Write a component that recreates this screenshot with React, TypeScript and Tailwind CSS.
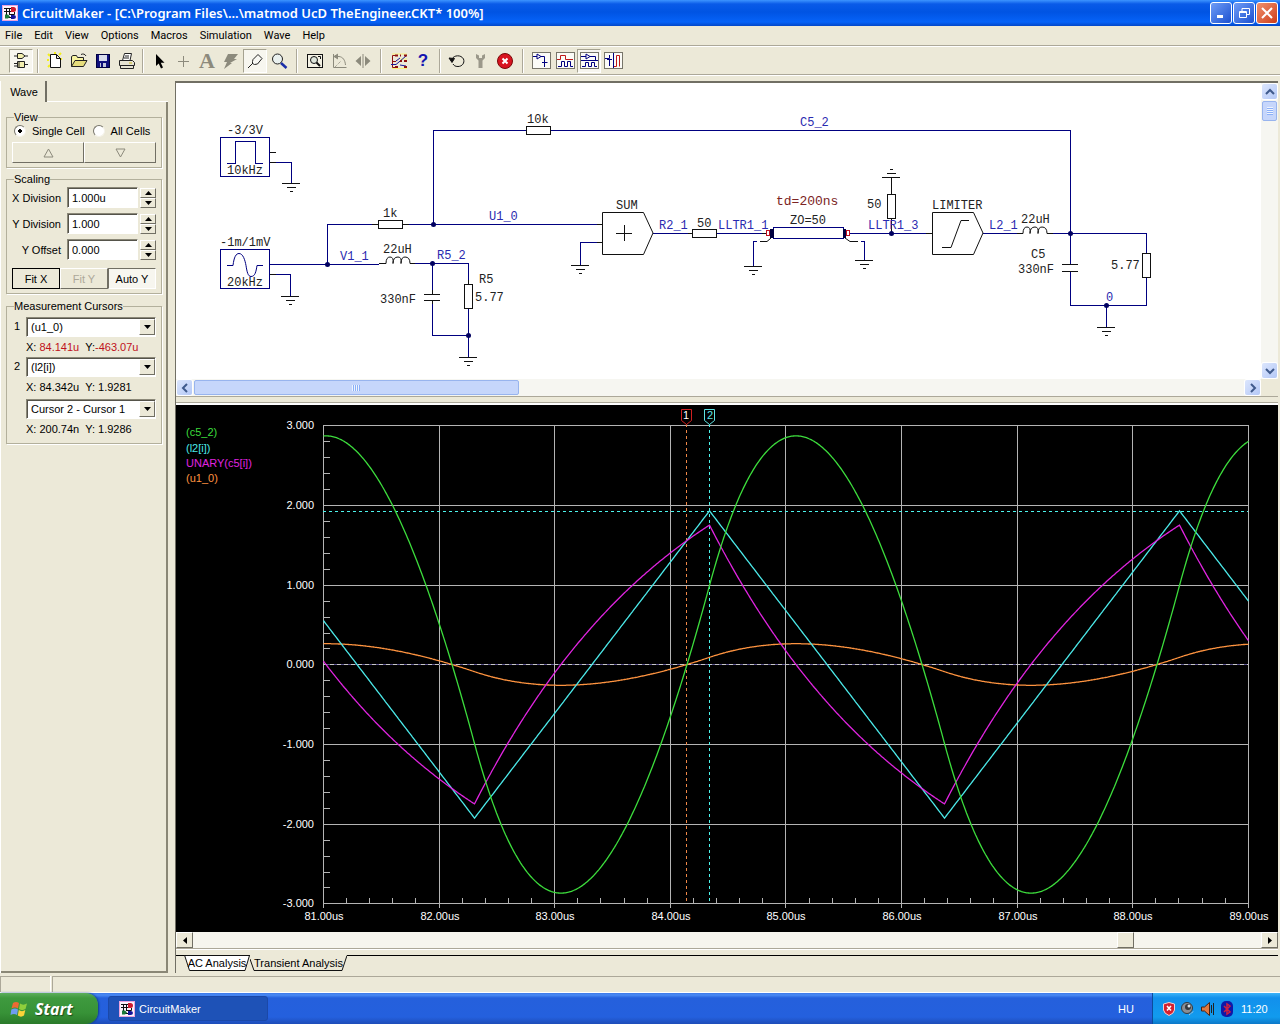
import React from "react";

/* ---------- small drawings ---------- */

function AppLogo() {
  return (
    <svg width="16" height="16" viewBox="0 0 16 16" className="shrink-0" aria-hidden="true">
      <rect width="16" height="16" fill="#fdf3fa" />
      <rect x="0.5" y="0.5" width="15" height="15" fill="none" stroke="#eaa2dc" />
      <path d="M2 3.5H10M2 6.5H9M4.5 3V13M4.5 12.5H9M7.500 3V9M7 9.500H12.500V7" stroke="#111" fill="none" />
      <path d="M9 2H11.500Q14 2 14 4.500Q14 7 11.500 7H9Z" fill="#d01c30" />
      <path d="M9 10H11.500Q14 10 14 12Q14 14 11.500 14H9Z" fill="#14149a" />
      <path d="M3 9.500H6L8 11.500L6 13.500H3Z" fill="#1c7a3a" />
    </svg>
  );
}

function WindowsFlag() {
  return (
    <svg width="19" height="18" viewBox="0 0 19 18" aria-hidden="true">
      <path d="M3 3C5 1.500 7 1.500 9 3L8 8.500C6 7 4 7 1.500 8.500Z" fill="#ee6a34" />
      <path d="M10 3.500C12 5 14.500 5 17 3.500L15.500 9C13 10.500 11 10.500 9 9Z" fill="#8fcf3c" />
      <path d="M1.300 9.500C4 8 6 8 8 9.500L7 15C5 13.500 3 13.500 0.500 15Z" fill="#6f9df0" />
      <path d="M8.800 10C11 11.500 13 11.500 15.300 10L14 15.500C12 17 10 17 7.800 15.500Z" fill="#fbd33a" />
    </svg>
  );
}

const navy = "#000080";

const toolIcons: Record<string, React.ReactNode> = {
  gates: (
    <g fill="#f3efae" stroke="#222">
      <path d="M6.500 2.500H11L14 5L11 7.500H6.500ZM3 5H6M14 5H17" />
      <path d="M6.500 10.500H13.500V16.500H6.500ZM3 12.500H6M3 15H6M14 13.500H17M8 10V17" />
    </g>
  ),
  new: (
    <g>
      <path d="M3 3L5 5M2 9H4M16 2L14 4M10 1V3M17 8H15M3 16L5 14" stroke="#f4ee1c" strokeWidth="2" />
      <path d="M5.500 3.500H11.500L15.500 7.500V16.500H5.500ZM11.500 3.500V7.500H15.500" fill="#fff" stroke="#111" />
    </g>
  ),
  open: (
    <g stroke="#222">
      <path d="M2.500 15.500V5.500L4 4.500H7.500L8.500 6.500H14.500V9" fill="#f7f3a0" />
      <path d="M2.500 15.500L6 9.500H18L14.500 15.500Z" fill="#e6dd7c" />
      <path d="M12 3.500C14 2.500 16 3 17 5" fill="none" />
    </g>
  ),
  save: (
    <g>
      <rect x="3.500" y="3.500" width="13" height="13" fill="#10107c" stroke="#000040" />
      <rect x="6" y="4" width="8" height="6" fill="#d8dcec" />
      <rect x="7" y="12" width="6" height="4" fill="#c4c8dc" />
      <rect x="8" y="12" width="2" height="4" fill="#10107c" />
    </g>
  ),
  print: (
    <g stroke="#222" fill="#fff">
      <path d="M5.500 9.500L7.500 2.500H14.500L13 9.500Z" />
      <path d="M2.500 9.500H15.500L17.500 11.500V14.500H2.500Z" fill="#e6e3d2" />
      <path d="M3.500 14.500H16.500V17.500H3.500ZM8 5H12M7 7H12" fill="#e6e3d2" />
      <path d="M12 12H15" stroke="#c7b61c" />
    </g>
  ),
  pointer: <path d="M7 3V15L9.700 12.500L12 17.500L14 16.500L11.800 11.700H15.500Z" fill="#000" />,
  plus: <path d="M10.500 5V16M5 10.500H16" stroke="#8c8a7c" />,
  flash: <path d="M7 3H17L13 8H16L9 12H11L3 18L6 11H3Z" fill="#8c8a7c" />,
  probe: (
    <g fill="none" stroke="#222">
      <path d="M3 17L8 12M7.500 10.500V12.500L9.500 13.500L12.500 13L17 7.500L13 3.500L8 8.500Z" fill="#f8f8f4" />
    </g>
  ),
  magnify: (
    <g>
      <circle cx="8.500" cy="8" r="5" fill="#e9f0ee" stroke="#222" />
      <path d="M12 12L17.500 17" stroke="#1a2ea8" strokeWidth="2.500" />
    </g>
  ),
  page: (
    <g>
      <rect x="2.500" y="3.500" width="15" height="13" fill="#f4f2e4" stroke="#111" />
      <circle cx="9" cy="9" r="3.500" fill="#dfe6dc" stroke="#111" />
      <path d="M11.500 11.500L15 15" stroke="#111" strokeWidth="2" />
      <path d="M13 5.500H15.500V8" stroke="#111" fill="none" />
    </g>
  ),
  rotate: (
    <g fill="none" stroke="#8c8a7c">
      <path d="M4.500 3V16.500H17.500" />
      <path d="M5 5.500H10C14 6 16 9 16.500 14" />
      <path d="M9 3L5 5.500L9 8" fill="#8c8a7c" />
      <path d="M6 16L12 10" strokeDasharray="1 1" />
    </g>
  ),
  flip: (
    <g fill="#8c8a7c">
      <path d="M8 5V15L2.500 10ZM12 5V15L17.500 10Z" />
      <rect x="9.500" y="3" width="1" height="14" />
    </g>
  ),
  wires: (
    <g fill="none">
      <path d="M3 3H18M3 17.500H18M10 8H18" stroke="#fbf27c" strokeWidth="1" />
      <path d="M7 4.500H3.500V16.500H7M3.500 10.500H7" stroke="#8c1010" />
      <path d="M2 13.500H7L17 5M7 10L11 7M11 14L17 15" stroke="#1a1a9c" />
      <path d="M6 4.500H9M11 4.500H12M15 4.500H18M11 10H13M15 10H18M6 16H9M15 16H18" stroke="#8c1010" strokeWidth="2" />
    </g>
  ),
  undo: (
    <g fill="none" stroke="#111">
      <path d="M5 8C7 4 14 3.500 16.500 8C18 12 15 15.500 11 15.500C8 15.500 7 14.500 6 13" />
      <path d="M2 7L7.500 7.500L5 11.500Z" fill="#111" />
    </g>
  ),
  wrench: <path d="M5 3V7L7.500 9.500V17H11.500V9.500L14 7V3L11 4.500V7H8V4.500Z" fill="#9b988a" />,
  stop: (
    <g>
      <circle cx="10" cy="10" r="7.500" fill="#d81420" stroke="#7a0808" />
      <path d="M7.500 7.500L12.500 12.500M12.500 7.500L7.500 12.500" stroke="#fff" strokeWidth="2" />
    </g>
  ),
};

function Panel({ children }: { children: React.ReactNode }) {
  return (
    <g fill="none">
      <rect x="1.500" y="1.500" width="18" height="16" fill="#fbfbf7" stroke="#77756a" />
      {children}
    </g>
  );
}

toolIcons.paneA = (
  <Panel>
    <path d="M2 5.500H6M10 5.500H13.500V11M11 11.500H16.500M13.500 12V16M6 3L10 5.500L6 8Z" stroke={navy} />
  </Panel>
);
toolIcons.paneB = (
  <Panel>
    <path d="M2 8.500H5.500V4.500H10.500V8.500H18" stroke="#c01818" />
    <path d="M3 15.500H6.500V10.500H9.500V15.500H12.500V10.500H15.500V15.500H18" stroke={navy} />
  </Panel>
);
toolIcons.paneC = (
  <Panel>
    <path d="M2 5.500H7M11 5.500H16.500V9M7 3L11 5.500L7 8ZM2 9.500H19" stroke={navy} />
    <path d="M3 15.500H6.500V11.500H9.500V15.500H12.500V11.500H15.500V15.500H18" stroke={navy} />
  </Panel>
);
toolIcons.paneD = (
  <Panel>
    <path d="M2 7.500H6.500V4M4 8.500H9M6.500 9V15M10.500 2V17" stroke={navy} />
    <path d="M11 15.500H13.500V4.500H16.500V15.500" stroke="#c01818" />
  </Panel>
);

function Tool({ icon, label, on }: { icon: string; label: string; on?: boolean }) {
  return (
    <button
      aria-label={label}
      className={
        on
          ? "flex h-6 w-6 items-center justify-center border border-[#a5a290] border-r-white border-b-white bg-[#f7f6ef]"
          : "flex h-6 w-6 items-center justify-center"
      }
    >
      {icon === "letter" ? (
        <span className="font-['Liberation_Serif',serif] text-[22px] leading-5 font-bold text-[#8c8a7c]">A</span>
      ) : icon === "help" ? (
        <span className="font-['Liberation_Sans',sans-serif] text-[17px] leading-5 font-bold text-[#1414b0]">?</span>
      ) : (
        <svg width="20" height="20" viewBox="0 0 20 20" fill="none" className="shrink-0">
          {toolIcons[icon]}
        </svg>
      )}
    </button>
  );
}

function Sep({ size = "mid" }: { size?: "tight" | "mid" | "wide" }) {
  const margin = { tight: "mx-[3px]", mid: "mx-1", wide: "mx-[5px]" }[size];
  return <div className={`${margin} h-6 w-0.5 border-l border-[#aca899] bg-white`} />;
}

/* ---------- sidebar ---------- */

const bevel = "border border-white border-r-[#716f64] border-b-[#716f64] bg-[#ece9d8]";
const sunken = "border border-[#8b8878] border-r-white border-b-white bg-white shadow-[inset_1px_1px_0_#55534a]";

function Group({ title, children }: { title: string; children: React.ReactNode }) {
  return (
    <fieldset className="mr-1 ml-[5px] border border-[#b3b09c] px-[5px] pb-1 shadow-[1px_1px_0_#fff]">
      <legend className="ml-0.5 h-3.5 leading-3.5">{title}</legend>
      {children}
    </fieldset>
  );
}

function SpinRow({ label, value }: { label: string; value: string }) {
  const id = label.replace(" ", "-");
  return (
    <div className="flex items-center justify-end">
      <label htmlFor={id} className="pr-1.5">{label}</label>
      <input id={id} defaultValue={value} className={`h-[21px] w-[71px] px-1 outline-none ${sunken}`} />
      <div className="ml-0.5 flex flex-col">
        <button aria-label={`${label} up`} className={`flex h-2.5 w-4 items-center justify-center ${bevel}`}>
          <svg width="7" height="4" viewBox="0 0 7 4"><path d="M0 4H7L3.500 0Z" /></svg>
        </button>
        <button aria-label={`${label} down`} className={`flex h-2.5 w-4 items-center justify-center ${bevel}`}>
          <svg width="7" height="4" viewBox="0 0 7 4"><path d="M0 0H7L3.500 4Z" /></svg>
        </button>
      </div>
    </div>
  );
}

function Combo({ label, value }: { label: string; value: string }) {
  return (
    <div className="relative min-w-0 flex-1">
      <select aria-label={label} className={`block h-5 w-full appearance-none px-1 outline-none ${sunken}`}>
        <option>{value}</option>
      </select>
      <span className={`pointer-events-none absolute top-0.5 right-px flex h-4 w-4 items-center justify-center ${bevel}`}>
        <svg width="7" height="4" viewBox="0 0 7 4"><path d="M0 0H7L3.500 4Z" /></svg>
      </span>
    </div>
  );
}

function Radio({ label, checked }: { label: string; checked?: boolean }) {
  return (
    <label className="flex items-center gap-1.5">
      <input
        type="radio"
        name="cells"
        defaultChecked={checked}
        className="m-0 h-3 w-3 appearance-none rounded-full border border-[#77756a] border-r-[#f4f2e8] border-b-[#f4f2e8] bg-white checked:bg-[radial-gradient(circle,#000_0_2px,#fff_2px)]"
      />
      {label}
    </label>
  );
}

function Readout({ x, y, red }: { x: string; y: string; red?: boolean }) {
  return (
    <div className="flex h-5 items-center gap-1.5 pl-3.5">
      <span>X: <span className={red ? "text-[#c01020]" : ""}>{x}</span></span>
      <span>{red ? "Y:" : "Y: "}<span className={red ? "text-[#c01020]" : ""}>{y}</span></span>
    </div>
  );
}

function Sidebar() {
  return (
    <aside className="flex w-[168px] shrink-0 flex-col border-l border-white">
      <div className="flex h-[21px]">
        <button className="w-[46px] border-r-2 border-[#716f64] pl-0.5 pt-px">Wave</button>
        <div className="flex-1 border-b border-white" />
      </div>
      <div className="flex flex-1 flex-col border-r-2 border-b-2 border-[#8a8776] pt-2">
        <div className="flex flex-col gap-1">
          <Group title="View">
            <div className="flex h-3.5 items-center gap-2 pl-0.5">
              <Radio label="Single Cell" checked />
              <Radio label="All Cells" />
            </div>
            <div className="mt-1 flex">
              <button aria-label="Previous cell" className={`flex h-[21px] flex-1 items-center justify-center ${bevel}`}>
                <svg width="11" height="10" viewBox="0 0 11 10"><path d="M1 9H10L5.500 1Z" fill="none" stroke="#8c8a7c" /></svg>
              </button>
              <button aria-label="Next cell" className={`flex h-[21px] flex-1 items-center justify-center ${bevel}`}>
                <svg width="11" height="10" viewBox="0 0 11 10"><path d="M1 1H10L5.500 9Z" fill="none" stroke="#8c8a7c" /></svg>
              </button>
            </div>
          </Group>
          <Group title="Scaling">
            <div className="flex flex-col gap-[5px] pt-px">
              <SpinRow label="X Division" value="1.000u" />
              <SpinRow label="Y Division" value="1.000" />
              <SpinRow label="Y Offset" value="0.000" />
            </div>
            <div className="mt-2 flex">
              <button className={`h-[21px] flex-1 outline-1 -outline-offset-1 outline-black ${bevel}`}>Fit X</button>
              <button className={`h-[21px] flex-1 text-[#aca899] ${bevel}`}>Fit Y</button>
              <button className="h-[21px] flex-1 border border-[#716f64] border-r-white border-b-white bg-[#f7f6ef]">Auto Y</button>
            </div>
          </Group>
          <div className="pt-px">
            <Group title="Measurement Cursors">
              <div className="mt-1 flex items-start"><span className="w-3.5 pl-0.5 pt-0.5">1</span><Combo label="Cursor 1" value="(u1_0)" /></div>
              <Readout x="84.141u" y="-463.07u" red />
              <div className="flex items-start"><span className="w-3.5 pl-0.5 pt-0.5">2</span><Combo label="Cursor 2" value="(l2[i])" /></div>
              <Readout x="84.342u" y="1.9281" />
              <div className="mt-0.5 flex"><span className="w-3.5" /><Combo label="Difference" value="Cursor 2 - Cursor 1" /></div>
              <Readout x="200.74n" y="1.9286" />
            </Group>
          </div>
        </div>
      </div>
    </aside>
  );
}

/* ---------- schematic ---------- */

function Ground({ x, y, up }: { x: number; y: number; up?: boolean }) {
  const s = up ? -4 : 4;
  return <path d={`M${x - 9} ${y}.5H${x + 9}M${x - 4} ${y + s}.5H${x + 5}M${x - 1} ${y + 2 * s}.5H${x + 2}`} stroke="#111" />;
}

const nodes: [number, number][] = [
  [433, 224], [327, 264], [432, 263], [468, 335], [891, 233], [1070, 233], [1106, 305],
];

const resistors: [number, number, number, number][] = [
  [526, 126, 24, 8], [378, 220, 24, 8], [692, 229, 24, 8], [464, 284, 8, 24], [887, 194, 8, 24], [1142, 253, 8, 24],
];

const blackLabels: [number, number, string][] = [
  [227, 134, "-3/3V"], [227, 174, "10kHz"], [220, 246, "-1m/1mV"], [227, 286, "20kHz"],
  [383, 217, "1k"], [383, 253, "22uH"], [380, 303, "330nF"], [479, 283, "R5"], [475, 301, "5.77"],
  [527, 123, "10k"], [616, 209, "SUM"], [697, 227, "50"], [790, 224, "ZO=50"], [867, 208, "50"],
  [932, 209, "LIMITER"], [1021, 223, "22uH"], [1031, 258, "C5"], [1018, 273, "330nF"], [1111, 269, "5.77"],
];

const blueLabels: [number, number, string][] = [
  [340, 260, "V1_1"], [437, 259, "R5_2"], [489, 220, "U1_0"], [800, 126, "C5_2"], [659, 229, "R2_1"],
  [718, 229, "LLTR1_1"], [868, 229, "LLTR1_3"], [989, 229, "L2_1"], [1106, 301, "0"],
];

function Schematic() {
  return (
    <svg width="1085" height="296" viewBox="176 83 1085 296" className="block font-['Liberation_Mono',monospace]" fill="none">
      <g shapeRendering="crispEdges">
        <g stroke={navy}>
          <path d="M220.500 137.500H269.500V176.500H220.500ZM227 163.500H235.500V141.500H255.500V163.500H263" />
          <path d="M220.500 249.500H269.500V288.500H220.500Z" />
          <path d="M276 162.500H291.500V183M270 264.500H379M276 274.500H290.500V296M327.500 264V224.500H372M409 224.500H597" />
          <path d="M433.500 224V130.500H526M550 130.500H1070.500V264M1070.500 271V305.500H1146.500V277M1146.500 253V233.500H1053" />
          <path d="M415 263.500H468.500V280M432.500 263V290M432.500 304V335.500H468.500V357M468.500 308V335" />
          <path d="M597 242.500H580.500V265M653 233.500H688M716 233.500H762M757 241.500H753.500V266M861 241.500H864.500V260M849 233.500H926M983 233.500H1017" />
          <path d="M1106.500 305V327" />
          <rect x="773.500" y="227.500" width="70" height="11" fill="#fff" />
        </g>
        <g stroke="#111">
          <path d="M270 152.500H276M270 162.500H276M270 274.500H276M372 224.500H378M402 224.500H409M597 224.500H602M597 242.500H602M688 233.500H692M762 233.500H767M926 233.500H932" />
          <path d="M379 263.500H386M410 263.500H415M1017 233.500H1023M1047 233.500H1053M468.500 280V284M424 294.500H440M424 300.500H440M432.500 290V294M432.500 300V304" />
          <path d="M1062 264.500H1078M1062 271.500H1078M891.500 177V194M891.500 218V233M616 233.500H632M624.500 225V241" />
        </g>
        {resistors.map(([x, y, w, h]) => (
          <rect key={`${x}-${y}`} x={x + 0.5} y={y + 0.5} width={w} height={h} fill="#fff" stroke="#111" />
        ))}
        <g fill="#000040">
          <rect x="770" y="229" width="4" height="9" />
          <rect x="843" y="229" width="3" height="9" />
        </g>
        <path d="M766.500 230.500H769.500V235.500H766.500ZM846.500 230.500H849.500V235.500H846.500Z" stroke="#c01020" />
        <Ground x={291} y={183} />
        <Ground x={290} y={296} />
        <Ground x={468} y={357} />
        <Ground x={580} y={265} />
        <Ground x={753} y={266} />
        <Ground x={864} y={260} />
        <Ground x={891} y={177} up />
        <Ground x={1106} y={327} />
      </g>
      <g stroke="#111">
        <path d="M602.500 212.500H643.500L653 233L643.500 254.500H602.500ZM932.500 212.500H973.500L983 233L973.500 254.500H932.500Z" />
        <path d="M942 247.500H951L961 220.500H969M771 238L767 241.500H760M845 238L850 241.500H858" />
        <path d="M386 263.500Q386 257 390 257Q394 257 393 263.500Q393 257 398 257Q402 257 401 263.500Q401 257 405 257Q410 257 410 263.500" />
        <path d="M1023 233.500Q1023 227 1027 227Q1031 227 1030 233.500Q1030 227 1035 227Q1039 227 1038 233.500Q1038 227 1042 227Q1047 227 1047 233.500" />
      </g>
      <path d="M227 265.500H233C234 257 236 253.500 239 253.500C243 253.500 245 260 246 265.500C247 272 248 276.500 251 276.500C255 276.500 256 272 257 265.500H263" stroke={navy} />
      {nodes.map(([x, y]) => (
        <circle key={`${x}-${y}`} cx={x + 0.5} cy={y + 0.5} r="2.500" fill="#000060" />
      ))}
      <g className="text-[12px]" fill="#222">
        {blackLabels.map(([x, y, t]) => <text key={`${x}-${y}`} x={x} y={y}>{t}</text>)}
      </g>
      <g className="text-[12px]" fill="#2a2ab0">
        {blueLabels.map(([x, y, t]) => <text key={`${x}-${y}`} x={x} y={y}>{t}</text>)}
      </g>
      <text x="776" y="205" className="text-[13px]" fill="#7c2424">td=200ns</text>
    </svg>
  );
}

/* ---------- waveforms ---------- */

const LEFT = 323.5;
const RIGHT = 1248.5;
const ZERO = 664.5;
const UNIT = 79.67;
const DIV = 115.6;
const HALF = 235;
const SWITCH = 474.5;
const TAU = 212;
const PEAK = 1.75;
const SWING = (2 * PEAK) / (1 - Math.exp(-HALF / TAU));

const current = (t: number) => -PEAK + SWING * (1 - Math.exp(-t / TAU));
const charge = (t: number) => (SWING - PEAK) * t - SWING * TAU * (1 - Math.exp(-t / TAU));
const turn = -TAU * Math.log(1 - PEAK / SWING);
const gain = -2.87 / (charge(turn) - charge(HALF) / 2);

function phase(x: number) {
  const n = Math.floor((x - SWITCH) / HALF);
  return { t: x - SWITCH - n * HALF, sign: n % 2 === 0 ? 1 : -1 };
}

const capCurrent = (x: number) => {
  const { t, sign } = phase(x);
  return sign * current(t);
};
const output = (x: number) => {
  const { t, sign } = phase(x);
  return sign * gain * (charge(t) - charge(HALF) / 2);
};
const coil = (x: number) => {
  const { t, sign } = phase(x);
  return sign * (-1.928 + (2 * 1.928 * t) / HALF);
};

function trace(f: (x: number) => number) {
  const pts: string[] = [];
  for (let x = LEFT; x <= RIGHT; x += 1) pts.push(`${x},${(ZERO - f(x) * UNIT).toFixed(1)}`);
  return pts.join(" ");
}

const range = (n: number) => Array.from({ length: n }, (_, i) => i);
const gridY = (i: number) => Math.round(425.4 + i * UNIT);

function Chart() {
  return (
    <svg viewBox="176 405 1102 527" className="absolute inset-0 h-full w-full font-['Liberation_Sans',sans-serif] text-[11px]" fill="none">
      <g stroke="#b4b4b4" shapeRendering="crispEdges">
        {range(9).map((i) => {
          const x = Math.round(323 + i * DIV) + 0.5;
          return <path key={i} d={`M${x} 425V908`} />;
        })}
        {range(7).map((i) => (i === 3 ? null : <path key={i} d={`M323 ${gridY(i) + 0.5}H1249`} />))}
        {range(31).map((i) => <path key={i} d={`M323 ${gridY(i / 5) + 0.5}H330`} />)}
        {range(41).map((i) => <path key={i} d={`M${Math.round(323 + (i * DIV) / 5) + 0.5} 898V903`} />)}
        <path d="M323 664.500H1248" stroke="#5c5490" />
        <path d="M323 664.500H1248" stroke="#c8c8c8" strokeDasharray="4 3" />
        <path d="M323 511.500H1248" stroke="#4cf4ec" strokeDasharray="3 3" />
        <path d="M686.500 424V903" stroke="#f08848" strokeDasharray="3 3" />
        <path d="M709.500 424V903" stroke="#4cf4ec" strokeDasharray="3 3" />
      </g>
      <polyline points={trace((x) => output(x) / 11)} stroke="#ff9440" strokeWidth="1.300" />
      <polyline points={trace(coil)} stroke="#4be8e8" strokeWidth="1.300" />
      <polyline points={trace(capCurrent)} stroke="#e024e0" strokeWidth="1.300" />
      <polyline points={trace(output)} stroke="#3cdc3c" strokeWidth="1.300" />
      <path d="M681.500 409.500H691.500V420.500L686.500 424.500L681.500 420.500Z" stroke="#d02020" fill="#000" />
      <path d="M704.500 409.500H714.500V420.500L709.500 424.500L704.500 420.500Z" stroke="#5fe3e3" fill="#000" />
      <g textAnchor="middle">
        <text x="686" y="419" fill="#fff">1</text>
        <text x="710" y="419" fill="#5fe3e3">2</text>
      </g>
      <g fill="#fff" textAnchor="end">
        {["3.000", "2.000", "1.000", "0.000", "-1.000", "-2.000", "-3.000"].map((t, i) => (
          <text key={t} x="314" y={gridY(i) + 4}>{t}</text>
        ))}
      </g>
      <g fill="#fff" textAnchor="middle">
        {range(9).map((i) => <text key={i} x={Math.round(324 + i * DIV)} y="920">{`${81 + i}.00us`}</text>)}
      </g>
      <text x="186" y="436" fill="#3cdc3c">(c5_2)</text>
      <text x="186" y="452" fill="#4be8e8">(l2[i])</text>
      <text x="186" y="467" fill="#e024e0">UNARY(c5[i])</text>
      <text x="186" y="482" fill="#ff9440">(u1_0)</text>
    </svg>
  );
}

/* ---------- scroll bars ---------- */

function XpArrow({ d, label }: { d: string; label: string }) {
  return (
    <button aria-label={label} className="flex h-[15px] w-[15px] shrink-0 items-center justify-center rounded-xs bg-gradient-to-br from-[#dce6fd] to-[#b4c8f6] shadow-[0_0_0_1px_#fff]">
      <svg width="10" height="10" viewBox="0 0 10 10"><path d={d} fill="none" stroke="#3f5a8c" strokeWidth="2" /></svg>
    </button>
  );
}

function ClassicArrow({ d, label }: { d: string; label: string }) {
  return (
    <button aria-label={label} className={`flex w-[17px] shrink-0 items-center justify-center ${bevel}`}>
      <svg width="4" height="7" viewBox="0 0 4 7"><path d={d} /></svg>
    </button>
  );
}

/* ---------- page ---------- */

const menus = ["File", "Edit", "View", "Options", "Macros", "Simulation", "Wave", "Help"];

const caption = "flex h-[22px] w-[22px] items-center justify-center rounded-[3px] border border-white";

export default function App() {
  return (
    <div className="flex min-h-screen flex-col overflow-hidden bg-[#ece9d8] font-['Liberation_Sans',Arial,sans-serif] text-[11px] leading-3.5 text-black">
      <header className="flex h-[26px] items-center bg-[linear-gradient(#3d95ff_0,#0a5be8_4px,#0054e3_12px,#0663f8_22px,#0347c8_26px)] pr-0.5 pl-0.5">
        <AppLogo />
        <h1 className="ml-1 flex-1 font-['Noto_Sans',sans-serif] text-[13px] font-semibold text-white">
          CircuitMaker - [C:\Program Files\...\matmod UcD TheEngineer.CKT* 100%]
        </h1>
        <div className="flex gap-px">
          <button aria-label="Minimize" className={`${caption} bg-gradient-to-br from-[#6f9cf6] to-[#1c4fd0]`}>
            <svg width="14" height="14" viewBox="0 0 14 14"><path d="M3 10.500H9" stroke="#fff" strokeWidth="3" /></svg>
          </button>
          <button aria-label="Restore" className={`${caption} bg-gradient-to-br from-[#6f9cf6] to-[#1c4fd0]`}>
            <svg width="14" height="14" viewBox="0 0 14 14"><path d="M5 5V2.500H12.500V8.500H10M2.500 5.500H9.500V11.500H2.500ZM2.500 6.500H9.500" fill="none" stroke="#fff" /></svg>
          </button>
          <button aria-label="Close" className={`${caption} bg-gradient-to-br from-[#f0906c] to-[#cc3a14]`}>
            <svg width="14" height="14" viewBox="0 0 14 14"><path d="M2 2L12 12M12 2L2 12" stroke="#fff" strokeWidth="2" /></svg>
          </button>
        </div>
      </header>

      <nav className="flex h-5 items-center gap-3 border-b border-[#aca899] pl-[5px] font-['Roboto',sans-serif]">
        {menus.map((m) => <button key={m}>{m}</button>)}
      </nav>

      <div className="flex h-[29px] items-center border-t border-b border-t-white border-b-[#aca899] pl-[9px]">
        <Tool icon="gates" label="Parts" on />
        <Sep />
        <Tool icon="new" label="New" />
        <Tool icon="open" label="Open" />
        <Tool icon="save" label="Save" />
        <Tool icon="print" label="Print" />
        <Sep size="tight" />
        <Tool icon="pointer" label="Arrow" />
        <Tool icon="plus" label="Wire" />
        <Tool icon="letter" label="Text" />
        <Tool icon="flash" label="Delete" />
        <Tool icon="probe" label="Probe" on />
        <Tool icon="magnify" label="Zoom" />
        <Sep size="wide" />
        <Tool icon="page" label="Fit to window" />
        <Tool icon="rotate" label="Rotate" />
        <Tool icon="flip" label="Mirror" />
        <Sep size="wide" />
        <Tool icon="wires" label="Digital mode" />
        <Tool icon="help" label="Help" />
        <Sep />
        <Tool icon="undo" label="Reset" />
        <Tool icon="wrench" label="Setup" />
        <Tool icon="stop" label="Stop" />
        <Sep size="wide" />
        <Tool icon="paneA" label="Schematic only" />
        <Tool icon="paneB" label="Waves only" />
        <Tool icon="paneC" label="Split horizontally" on />
        <Tool icon="paneD" label="Split vertically" />
      </div>

      <main className="flex flex-1 border-t border-white pt-[5px] pr-0.5">
        <Sidebar />
        <div className="ml-[7px] flex min-w-0 flex-1 flex-col border-l border-[#716f64]">
          <section className="border-t-2 border-[#716f64]">
            <div className="flex h-[296px] bg-white">
              <div className="min-w-0 flex-1 overflow-hidden"><Schematic /></div>
              <div className="flex w-[17px] flex-col items-center gap-0.5 bg-[#f6f6f1] py-px">
                <XpArrow label="Scroll up" d="M1 7L5 3L9 7" />
                <div className="flex h-5 w-[15px] items-center justify-center rounded-xs border border-[#98b4ee] bg-[#c6d6fb]">
                  <div className="h-2 w-1.5 bg-[repeating-linear-gradient(#eef4fe_0_1px,#8cb0f8_1px_2px)]" />
                </div>
                <div className="flex-1" />
                <XpArrow label="Scroll down" d="M1 3L5 7L9 3" />
              </div>
            </div>
            <div className="flex h-[17px]">
              <div className="flex flex-1 items-center gap-0.5 bg-[#f6f6f1] px-px">
                <XpArrow label="Scroll left" d="M7 1L3 5L7 9" />
                <div className="flex h-[15px] w-[30%] items-center justify-center rounded-xs border border-[#98b4ee] bg-[#c6d6fb]">
                  <div className="h-1.5 w-2 bg-[repeating-linear-gradient(90deg,#eef4fe_0_1px,#8cb0f8_1px_2px)]" />
                </div>
                <div className="flex-1" />
                <XpArrow label="Scroll right" d="M3 1L7 5L3 9" />
              </div>
              <div className="w-[17px]" />
            </div>
          </section>
          <div className="h-[7px] border-t border-b border-[#aca899]" />
          <section className="flex flex-1 flex-col border-t-2 border-white">
            <div className="relative flex-1 bg-black"><Chart /></div>
            <div className="flex h-[17px] border-b border-[#aca899] bg-[#f6f5ee]">
              <ClassicArrow label="Scroll left" d="M4 0V7L0 3.500Z" />
              <div className="flex-1" />
              <div className={`w-[17px] ${bevel}`} />
              <div className="w-[11.500%]" />
              <ClassicArrow label="Scroll right" d="M0 0V7L4 3.500Z" />
            </div>
            <div className="flex h-6 items-start border-t border-white pt-[5px]">
              <div className="h-px w-2 bg-black" />
              <button className="relative h-4 w-[66px]">
                <svg viewBox="0 0 66 16" className="absolute inset-0 h-full w-full" fill="none"><path d="M0.500 0L5.500 15.500H61L65.500 0.500" fill="#fff" stroke="#111" /><path d="M0 0.500H66" stroke="#111" /></svg>
                <span className="relative">AC Analysis</span>
              </button>
              <button className="relative h-4 w-[97px]">
                <svg viewBox="0 0 97 16" className="absolute inset-0 h-full w-full" fill="none"><path d="M0 4L4 15.500H92L97 0.500" stroke="#111" /></svg>
                <span className="relative">Transient Analysis</span>
              </button>
              <div className="h-px flex-1 bg-black" />
            </div>
          </section>
        </div>
      </main>

      <div className="mt-[3px] flex h-[17px] gap-0.5 border-b border-white">
        <div className="w-[50px] border-t border-l border-[#aca899] shadow-[1px_0_0_#fff]" />
        <div className="flex-1 border-t border-l border-[#aca899]" />
      </div>

      <footer className="flex h-[31px] items-stretch bg-[linear-gradient(#3b78e8_0,#4a8af4_2px,#2560dc_5px,#2460de_24px,#1d4cb8_31px)] text-white">
        <button className="flex w-[98px] items-center gap-1.5 rounded-r-xl bg-[linear-gradient(#5cae5c_0,#3f9a3f_5px,#379237_20px,#2a7a2a_31px)] pl-2.5 font-['Open_Sans',sans-serif] text-[16px] font-bold italic shadow-[1px_0_2px_#123c8c]">
          <WindowsFlag />
          <span className="[text-shadow:1px_1px_1px_#1c4c1c]">Start</span>
        </button>
        <button className="my-[3px] ml-2.5 flex w-40 items-center gap-1 rounded-[3px] border border-[#1b48a8] bg-[#1e52b7] pl-2.5">
          <AppLogo />
          <span>CircuitMaker</span>
        </button>
        <div className="flex-1" />
        <span className="flex w-[34px] items-center">HU</span>
        <div className="flex w-[128px] items-center gap-1.5 border-l border-[#0c4c9c] bg-[linear-gradient(#3cb4f8_0,#1290ec_5px,#119bee_24px,#0c78c8_31px)] pl-2.5">
          <svg width="12" height="14" viewBox="0 0 12 14"><path d="M6 0.500L11.500 2V8Q11 11.500 6 13.500Q1 11.500 0.500 8V2Z" fill="#d42030" stroke="#f4d0d0" /><path d="M4 4L8 8.500M8 4L4 8.500" stroke="#fff" strokeWidth="1.500" /></svg>
          <svg width="14" height="14" viewBox="0 0 14 14"><circle cx="6" cy="6" r="5.500" fill="#8a8e94" stroke="#34383e" /><circle cx="7" cy="5" r="3" fill="#34383e" /><circle cx="8" cy="4" r="1.500" fill="#dfe3e8" /><path d="M8 13L13 9" stroke="#b8c4d4" strokeDasharray="2 1" /></svg>
          <svg width="14" height="14" viewBox="0 0 14 14"><path d="M0.500 5H3.500L8.500 0.500V13.500L3.500 9H0.500Z" fill="#e07840" stroke="#4a2010" /><path d="M10.500 3V11M12.500 1V13" stroke="#222" /></svg>
          <svg width="12" height="16" viewBox="0 0 12 16"><rect width="12" height="16" rx="5" fill="#1018a8" /><path d="M3 5L9 11L6 13V3L9 5L3 11" fill="none" stroke="#d02040" strokeWidth="1.500" /></svg>
          <span className="ml-0.5">11:20</span>
        </div>
      </footer>
    </div>
  );
}
